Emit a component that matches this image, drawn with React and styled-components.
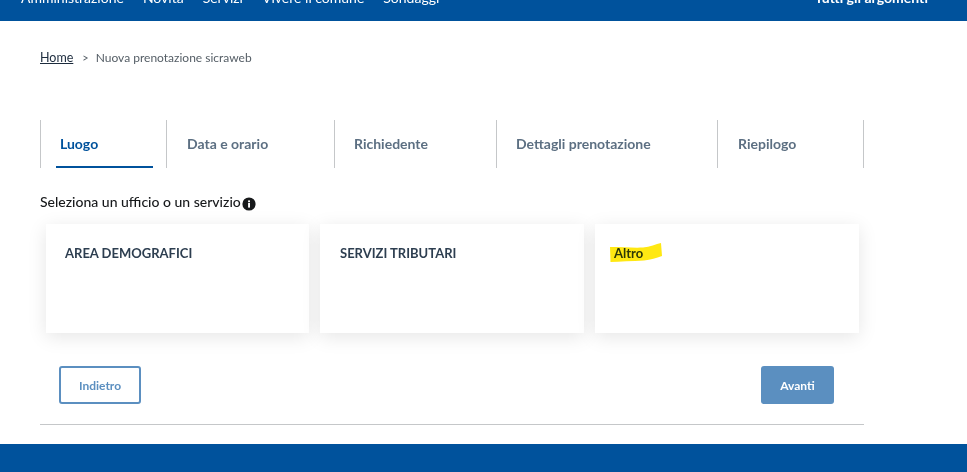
import React from "react";
import styled, { createGlobalStyle } from "styled-components";

const GlobalStyle = createGlobalStyle`
  html, body {
    margin: 0;
    padding: 0;
    background: #fff;
  }
  body {
    font-family: "Lato", "Noto Sans", sans-serif;
    overflow: hidden;
  }
`;

const Page = styled.div`
  width: 967px;
  height: 472px;
  overflow: hidden;
  display: flex;
  flex-direction: column;
`;

const TopBar = styled.div`
  height: 21px;
  flex: none;
  background: #00529c;
  color: #fff;
  padding: 0 39px 0 21px;
  display: flex;
  justify-content: space-between;
  align-items: flex-end;
  overflow: hidden;
`;

const NavList = styled.div`
  display: flex;
  gap: 19px;
  height: 33px;
  font-size: 14px;
  line-height: 20px;
`;

const AllTopics = styled.div`
  height: 33px;
  font-size: 14px;
  line-height: 20px;
  font-weight: 700;
`;

const Main = styled.div`
  flex: 1;
  width: 824px;
  margin-left: 40px;
  display: flex;
  flex-direction: column;
`;

const Breadcrumb = styled.div`
  display: flex;
  align-items: center;
  height: 16px;
  margin-top: 28px;
  font-size: 12px;
  color: #555e66;
`;

const HomeLink = styled.a`
  color: #1c2b3d;
  font-size: 12.5px;
  text-decoration: underline;
`;

const Sep = styled.span`
  margin: 0 7px 0 9px;
  font-size: 11px;
`;

const Tabs = styled.div`
  display: flex;
  height: 48px;
  margin-top: 55px;
  border-right: 1px solid #c5c7c9;
`;

const Tab = styled.div`
  position: relative;
  width: ${(p) => p.$w}px;
  box-sizing: border-box;
  border-left: 1px solid #c5c7c9;
  padding: 15px 0 0 ${(p) => p.$pad || 19}px;
  font-size: 14px;
  line-height: 18px;
  font-weight: 700;
  color: ${(p) => (p.$active ? "#00529c" : "#5c6f82")};
`;

const TabMark = styled.div`
  position: absolute;
  left: 15px;
  bottom: 0;
  width: 97px;
  height: 2px;
  background: #00529c;
`;

const Label = styled.div`
  display: flex;
  align-items: center;
  margin-top: 25px;
  height: 17px;
  font-size: 14px;
  font-weight: 500;
  color: #17191b;
`;

const InfoIcon = styled.svg`
  width: 14px;
  height: 14px;
  margin: 4px 0 0 1px;
`;

const Cards = styled.div`
  display: flex;
  gap: 11px;
  margin: 14px 0 0 6px;
`;

const Card = styled.div`
  position: relative;
  width: ${(p) => p.$w || 264}px;
  height: 109px;
  box-sizing: border-box;
  padding: 20px ${(p) => p.$pad || 19}px;
  background: #fff;
  box-shadow: 0 4px 18px rgba(0, 0, 0, 0.1);
  font-size: 13px;
  line-height: 18px;
  font-weight: 700;
  color: #2d3e50;
`;

const Marker = styled.svg`
  position: absolute;
  left: 15px;
  top: 19px;
  width: 52px;
  height: 19px;
  mix-blend-mode: multiply;
`;

const Actions = styled.div`
  display: flex;
  justify-content: space-between;
  margin: 33px 30px 0 19px;
`;

const OutlineButton = styled.button`
  width: 82px;
  height: 38px;
  box-sizing: border-box;
  border: 2px solid #5b8fc0;
  border-radius: 3px;
  background: #fff;
  color: #5b8fc0;
  font: 700 12px "Lato", sans-serif;
`;

const FilledButton = styled.button`
  width: 73px;
  height: 38px;
  border: 0;
  border-radius: 3px;
  background: #5b8fc0;
  color: #fff;
  font: 700 12px "Lato", sans-serif;
`;

const Rule = styled.div`
  height: 1px;
  margin-top: 20px;
  background: #c5c7c9;
`;

const Footer = styled.div`
  height: 28px;
  flex: none;
  background: #00529c;
`;

const navItems = ["Amministrazione", "Novità", "Servizi", "Vivere il comune", "Sondaggi"];

const tabs = [
  { name: "Luogo", w: 126, active: true },
  { name: "Data e orario", w: 168, pad: 20 },
  { name: "Richiedente", w: 162 },
  { name: "Dettagli prenotazione", w: 221 },
  { name: "Riepilogo", w: 146, pad: 20 },
];

const App = () => {
  return (
    <Page>
      <GlobalStyle />
      <TopBar>
        <NavList>
          {navItems.map((item) => (
            <span key={item}>{item}</span>
          ))}
        </NavList>
        <AllTopics>Tutti gli argomenti</AllTopics>
      </TopBar>
      <Main>
        <Breadcrumb>
          <HomeLink>Home</HomeLink>
          <Sep>&gt;</Sep>
          <span>Nuova prenotazione sicraweb</span>
        </Breadcrumb>
        <Tabs>
          {tabs.map((tab) => (
            <Tab key={tab.name} $w={tab.w} $active={tab.active} $pad={tab.pad}>
              {tab.name}
              {tab.active && <TabMark />}
            </Tab>
          ))}
        </Tabs>
        <Label>
          Seleziona un ufficio o un servizio
          <InfoIcon viewBox="0 0 14 14">
            <circle cx="7" cy="7" r="6.6" fill="#17191b" />
            <rect x="6.1" y="6" width="1.9" height="4.6" fill="#fff" />
            <rect x="6.1" y="3.4" width="1.9" height="1.8" fill="#fff" />
          </InfoIcon>
        </Label>
        <Cards>
          <Card $w={263}>AREA DEMOGRAFICI</Card>
          <Card $pad={20}>SERVIZI TRIBUTARI</Card>
          <Card>
            Altro
            <Marker viewBox="0 0 52 19">
              <path
                d="M0 4 C12 4 24 5 33 4.5 C40 4 46 1 51 0 L52 13 C46 15 41 17 34 17.5 C22 18 10 18.5 0.5 19 Z"
                fill="#ffe812"
              />
            </Marker>
          </Card>
        </Cards>
        <Actions>
          <OutlineButton>Indietro</OutlineButton>
          <FilledButton>Avanti</FilledButton>
        </Actions>
        <Rule />
      </Main>
      <Footer />
    </Page>
  );
};

export default App;
